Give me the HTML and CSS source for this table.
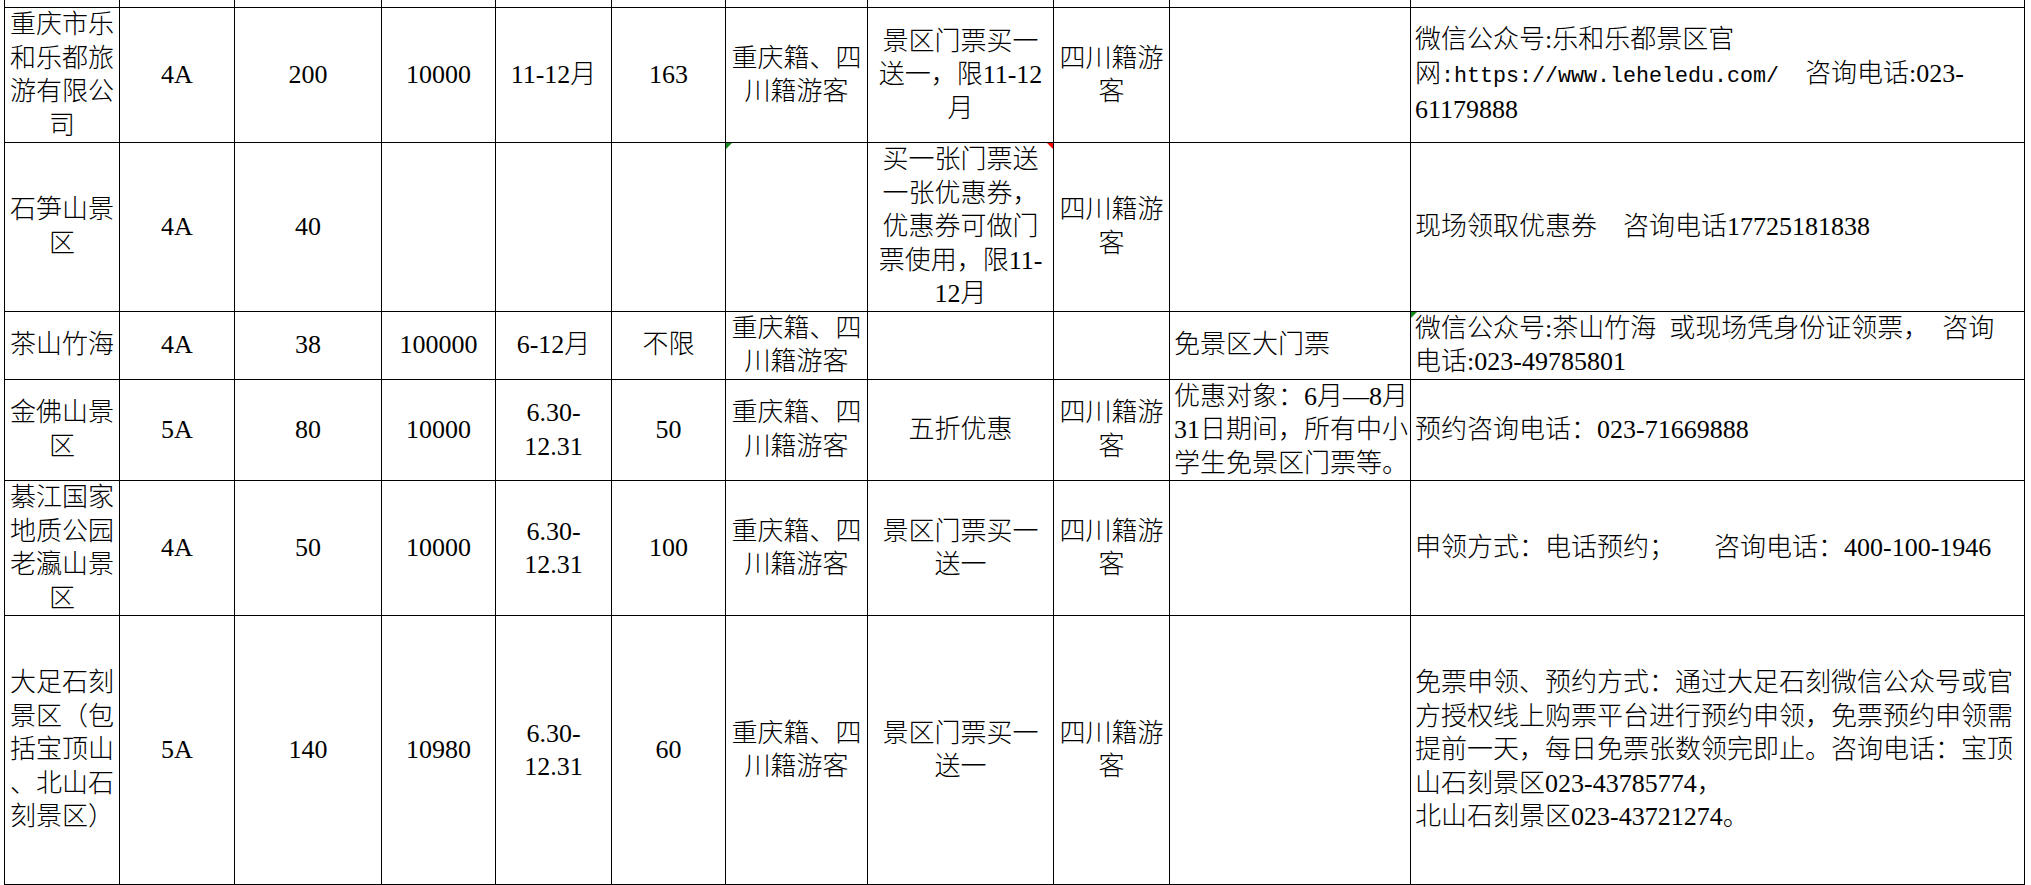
FILE: index.html
```html
<!DOCTYPE html>
<html lang="zh-CN">
<head>
<meta charset="utf-8">
<title>景区优惠</title>
<link rel="stylesheet" href="styles.css">
</head>
<body>
<div class="sheet">
<table class="grid">
<colgroup>
<col class="c1"><col class="c2"><col class="c3"><col class="c4"><col class="c5"><col class="c6"><col class="c7"><col class="c8"><col class="c9"><col class="c10"><col class="c11">
</colgroup>
<tbody>
<tr class="r0">
<td></td><td></td><td></td><td></td><td class="ctr bottom">12月</td><td></td><td></td><td></td><td></td><td></td><td></td>
</tr>
<tr class="r1">
<td class="ctr">重庆市乐<br>和乐都旅<br>游有限公<br>司</td>
<td class="ctr">4A</td>
<td class="ctr">200</td>
<td class="ctr">10000</td>
<td class="ctr">11-12月</td>
<td class="ctr">163</td>
<td class="ctr">重庆籍、四<br>川籍游客</td>
<td class="ctr">景区门票买一<br>送一，限11-12<br>月</td>
<td class="ctr">四川籍游<br>客</td>
<td class="lft"></td>
<td class="lft">微信公众号:乐和乐都景区官<br>网<span class="mono">:https://www.leheledu.com/&nbsp;&nbsp;</span>咨询电话:023-<br>61179888</td>
</tr>
<tr class="r2">
<td class="ctr">石笋山景<br>区</td>
<td class="ctr">4A</td>
<td class="ctr">40</td>
<td class="ctr"></td>
<td class="ctr"></td>
<td class="ctr"></td>
<td class="ctr mark"><span class="tri-green"></span></td>
<td class="ctr mark">买一张门票送<br>一张优惠券，<br>优惠券可做门<br>票使用，限11-<br>12月<span class="tri-red"></span></td>
<td class="ctr">四川籍游<br>客</td>
<td class="lft"></td>
<td class="lft">现场领取优惠券&ensp;&ensp;咨询电话17725181838</td>
</tr>
<tr class="r3">
<td class="ctr">茶山竹海</td>
<td class="ctr">4A</td>
<td class="ctr">38</td>
<td class="ctr">100000</td>
<td class="ctr">6-12月</td>
<td class="ctr">不限</td>
<td class="ctr">重庆籍、四<br>川籍游客</td>
<td class="ctr"></td>
<td class="ctr"></td>
<td class="lft">免景区大门票</td>
<td class="lft mark"><span class="tri-green"></span>微信公众号:茶山竹海&ensp;或现场凭身份证领票，&ensp;咨询<br>电话:023-49785801</td>
</tr>
<tr class="r4">
<td class="ctr">金佛山景<br>区</td>
<td class="ctr">5A</td>
<td class="ctr">80</td>
<td class="ctr">10000</td>
<td class="ctr">6.30-<br>12.31</td>
<td class="ctr">50</td>
<td class="ctr">重庆籍、四<br>川籍游客</td>
<td class="ctr">五折优惠</td>
<td class="ctr">四川籍游<br>客</td>
<td class="lft">优惠对象：6月—8月<br>31日期间，所有中小<br>学生免景区门票等。</td>
<td class="lft">预约咨询电话：023-71669888</td>
</tr>
<tr class="r5">
<td class="ctr">綦江国家<br>地质公园<br>老瀛山景<br>区</td>
<td class="ctr">4A</td>
<td class="ctr">50</td>
<td class="ctr">10000</td>
<td class="ctr">6.30-<br>12.31</td>
<td class="ctr">100</td>
<td class="ctr">重庆籍、四<br>川籍游客</td>
<td class="ctr">景区门票买一<br>送一</td>
<td class="ctr">四川籍游<br>客</td>
<td class="lft"></td>
<td class="lft">申领方式：电话预约；&ensp;&ensp;&ensp;咨询电话：400-100-1946</td>
</tr>
<tr class="r6">
<td class="ctr">大足石刻<br>景区（包<br>括宝顶山<br>、北山石<br>刻景区）</td>
<td class="ctr">5A</td>
<td class="ctr">140</td>
<td class="ctr">10980</td>
<td class="ctr">6.30-<br>12.31</td>
<td class="ctr">60</td>
<td class="ctr">重庆籍、四<br>川籍游客</td>
<td class="ctr">景区门票买一<br>送一</td>
<td class="ctr">四川籍游<br>客</td>
<td class="lft"></td>
<td class="lft">免票申领、预约方式：通过大足石刻微信公众号或官<br>方授权线上购票平台进行预约申领，免票预约申领需<br>提前一天，每日免票张数领完即止。咨询电话：宝顶<br>山石刻景区023-43785774，<br>北山石刻景区023-43721274。</td>
</tr>
<tr class="r7">
<td></td><td></td><td></td><td></td><td></td><td></td><td></td><td></td><td></td><td></td><td></td>
</tr>
</tbody>
</table>
</div>
</body>
</html>
```
FILE: styles.css
```css
html, body {
  margin: 0;
  padding: 0;
  background: #ffffff;
}

.sheet {
  width: 2031px;
  height: 885px;
  overflow: hidden;
  background: #ffffff;
}

.grid {
  border-collapse: collapse;
  table-layout: fixed;
  width: 2021px;
  margin-top: -33px;
  margin-left: 4px;
  font-family: "Liberation Serif", "Noto Sans CJK SC", serif;
  font-weight: 300;
  font-size: 26px;
  line-height: 33.5px;
  color: #000000;
}

.grid td {
  border: 1px solid #000000;
  padding: 0 4px;
  vertical-align: middle;
  white-space: nowrap;
  overflow: hidden;
}

.c1 { width: 115px; }
.c2 { width: 115px; }
.c3 { width: 147px; }
.c4 { width: 114px; }
.c5 { width: 116px; }
.c6 { width: 114px; }
.c7 { width: 142px; }
.c8 { width: 186px; }
.c9 { width: 116px; }
.c10 { width: 241px; }
.c11 { width: 614px; }

.r0 { height: 40px; }
.r1 { height: 134px; }
.r2 { height: 168px; }
.r3 { height: 67px; }
.r4 { height: 101px; }
.r5 { height: 134px; }
.r6 { height: 269px; }
.r7 { height: 40px; }

.ctr { text-align: center; }
.lft { text-align: left; }
.bottom {
  vertical-align: bottom;
  line-height: 30px;
}

.mono {
  font-family: "Liberation Mono", monospace;
  font-size: 21.67px;
}

.mark { position: relative; }

.tri-green {
  position: absolute;
  left: 0;
  top: 0;
  width: 0;
  height: 0;
  border-top: 6px solid #12891a;
  border-right: 6px solid transparent;
}

.tri-red {
  position: absolute;
  right: 0;
  top: 0;
  width: 0;
  height: 0;
  border-top: 6px solid #ff0000;
  border-left: 6px solid transparent;
}
```
